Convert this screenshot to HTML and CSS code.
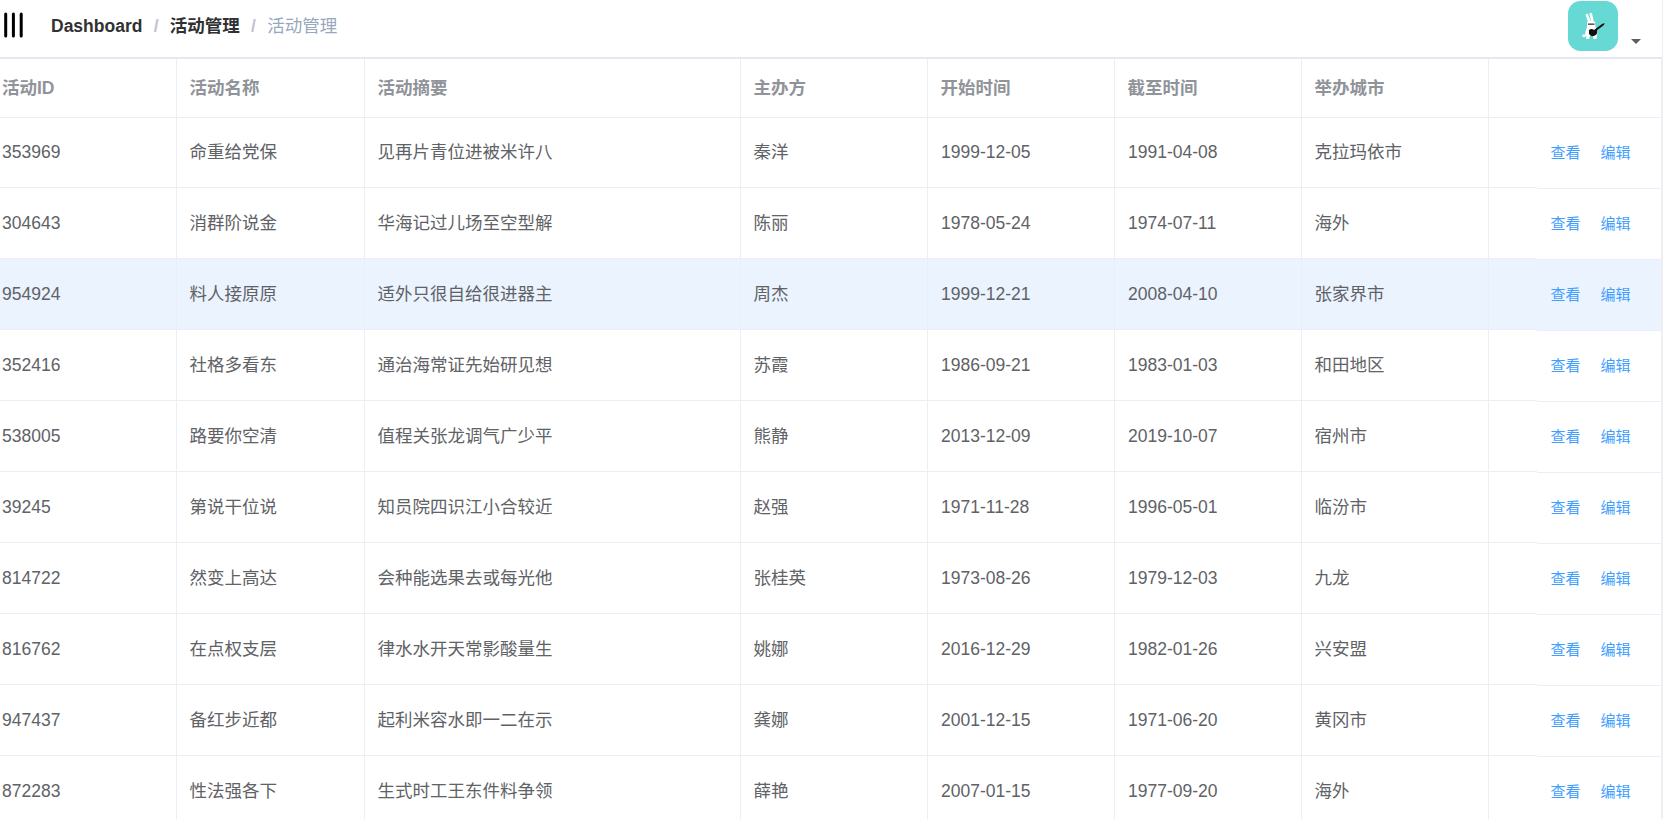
FILE: index.html
```html
<!DOCTYPE html>
<html lang="zh-CN">
<head>
<meta charset="utf-8">
<title>活动管理</title>
<link rel="stylesheet" href="styles.css">
</head>
<body>
<div class="page">
  <header class="navbar">
    <svg class="menu" width="20" height="26" viewBox="0 0 20 26" stroke="#000" stroke-width="3" stroke-linecap="round"><path d="M1.700 2v22M9.400 2v22M17.200 2v22"/></svg>
    <nav class="crumbs"><a class="crumb">Dashboard</a><span class="sep">/</span><a class="crumb">活动管理</a><span class="sep">/</span><span class="current">活动管理</span></nav>
    <div class="user">
      <svg class="avatar" width="50" height="50" viewBox="0 0 50 50">
        <rect width="50" height="50" rx="12.5" fill="#66d9d5"/>
        <path d="M21.500 21L19 14M24.500 20.500L22.800 13" stroke="#fff" stroke-width="2.600" stroke-linecap="round" fill="none"/>
        <path d="M19 21q4-3 8 0l0.500 5 2 5-1 7h-3l-.5-3-3 0-1 3h-3l.5-3-2.500 1.500-2-1.500 1-1.500 2 0 1-5 1-2z" fill="#fff"/>
        <path d="M20 22.500h6.500v1.300H20z" fill="#443038"/>
        <path d="M21 29q2.500-2 5 0l2-1.500 6-4.500 2.500-1-.5 2-7 5.200q1 4-2.500 5.500-4 1.500-5.500-2z" fill="#111"/>
      </svg>
      <i class="caret"></i>
    </div>
  </header>
  <main class="table" id="table">
    <div class="row head"><div>活动ID</div><div>活动名称</div><div>活动摘要</div><div>主办方</div><div>开始时间</div><div>截至时间</div><div>举办城市</div><div class="blank"></div><div class="actions"></div></div>
  </main>
</div>
<script src="table.js"></script>
</body>
</html>
```
FILE: styles.css
```css
* { box-sizing: border-box; }
body { margin: 0; background: #fff; overflow: hidden; font-family: "Liberation Sans", "Noto Sans CJK SC", sans-serif; font-size: 17.5px; color: #606266; }
.page { height: 819px; overflow: hidden; border-right: 1px solid #eeeef3; }
.navbar { height: 59px; display: flex; align-items: flex-start; border-bottom: 2px solid #e6e8f0; padding-left: 4px; }
.menu { margin-top: 12px; }
.crumbs { display: flex; align-items: center; height: 52px; margin-left: 27px; line-height: 20px; }
.crumb { font-weight: 700; color: #303133; }
.sep { margin: 0 11.25px; font-weight: 700; color: #c0c4cc; }
.current { color: #97a8be; }
.user { margin: 1px 21px 0 auto; display: flex; align-items: flex-end; gap: 13px; height: 50px; }
.caret { border: 5px solid transparent; border-top-color: #5a5e66; border-bottom: 0; margin-bottom: 7px; }
.table { border-right: 1px solid #ebeef5; }
.row { display: grid; grid-template-columns: 177px 188px 376px 187px 187px 187px 187px 48px 1fr; grid-template-rows: 100%; height: 71px; line-height: 24px; }
.row > div { display: flex; align-items: center; padding-left: 12.5px; border-bottom: 1px solid #ebeef5; border-right: 1px solid #ebeef5; white-space: nowrap; }
.row > div:first-child { padding-left: 2px; }
.row > .date { padding-left: 13px; }
.row > .blank, .row > .actions { border-right: 0; }
.row.head { height: 59px; font-weight: 700; color: #909399; }
.row.first { height: 70px; }
.row.first > div { padding-bottom: 1px; }
.row.hover > div { background: #ebf3fe; }
.row > .actions { height: 71px; margin-top: 1px; padding-bottom: 1px; gap: 20px; padding-left: 13.5px; font-size: 15px; color: #409eff; }
.row.first > .actions { height: 70px; padding-bottom: 1px; }
.row.head > .actions { height: 59px; margin-top: 0; }
```
FILE: table.js
```js
const rows = `353969,命重给党保,见再片青位进被米许八,秦洋,1999-12-05,1991-04-08,克拉玛依市
304643,消群阶说金,华海记过儿场至空型解,陈丽,1978-05-24,1974-07-11,海外
954924,料人接原原,适外只很自给很进器主,周杰,1999-12-21,2008-04-10,张家界市
352416,社格多看东,通治海常证先始研见想,苏霞,1986-09-21,1983-01-03,和田地区
538005,路要你空清,值程关张龙调气广少平,熊静,2013-12-09,2019-10-07,宿州市
39245,第说干位说,知员院四识江小合较近,赵强,1971-11-28,1996-05-01,临汾市
814722,然变上高达,会种能选果去或每光他,张桂英,1973-08-26,1979-12-03,九龙
816762,在点权支层,律水水开天常影酸量生,姚娜,2016-12-29,1982-01-26,兴安盟
947437,备红步近都,起利米容水即一二在示,龚娜,2001-12-15,1971-06-20,黄冈市
872283,性法强各下,生式时工王东件料争领,薛艳,2007-01-15,1977-09-20,海外`.split("\n").map(line => line.split(","));
const table = document.getElementById("table");
rows.forEach((cells, i) => {
  const row = document.createElement("div");
  row.className = "row" + (i === 0 ? " first" : "") + (i === 2 ? " hover" : "");
  row.innerHTML = cells.map((c, k) => `<div${k === 4 || k === 5 ? ' class="date"' : ""}>${c}</div>`).join("") +
    '<div class="blank"></div><div class="actions"><a>查看</a><a>编辑</a></div>';
  table.append(row);
});
```
